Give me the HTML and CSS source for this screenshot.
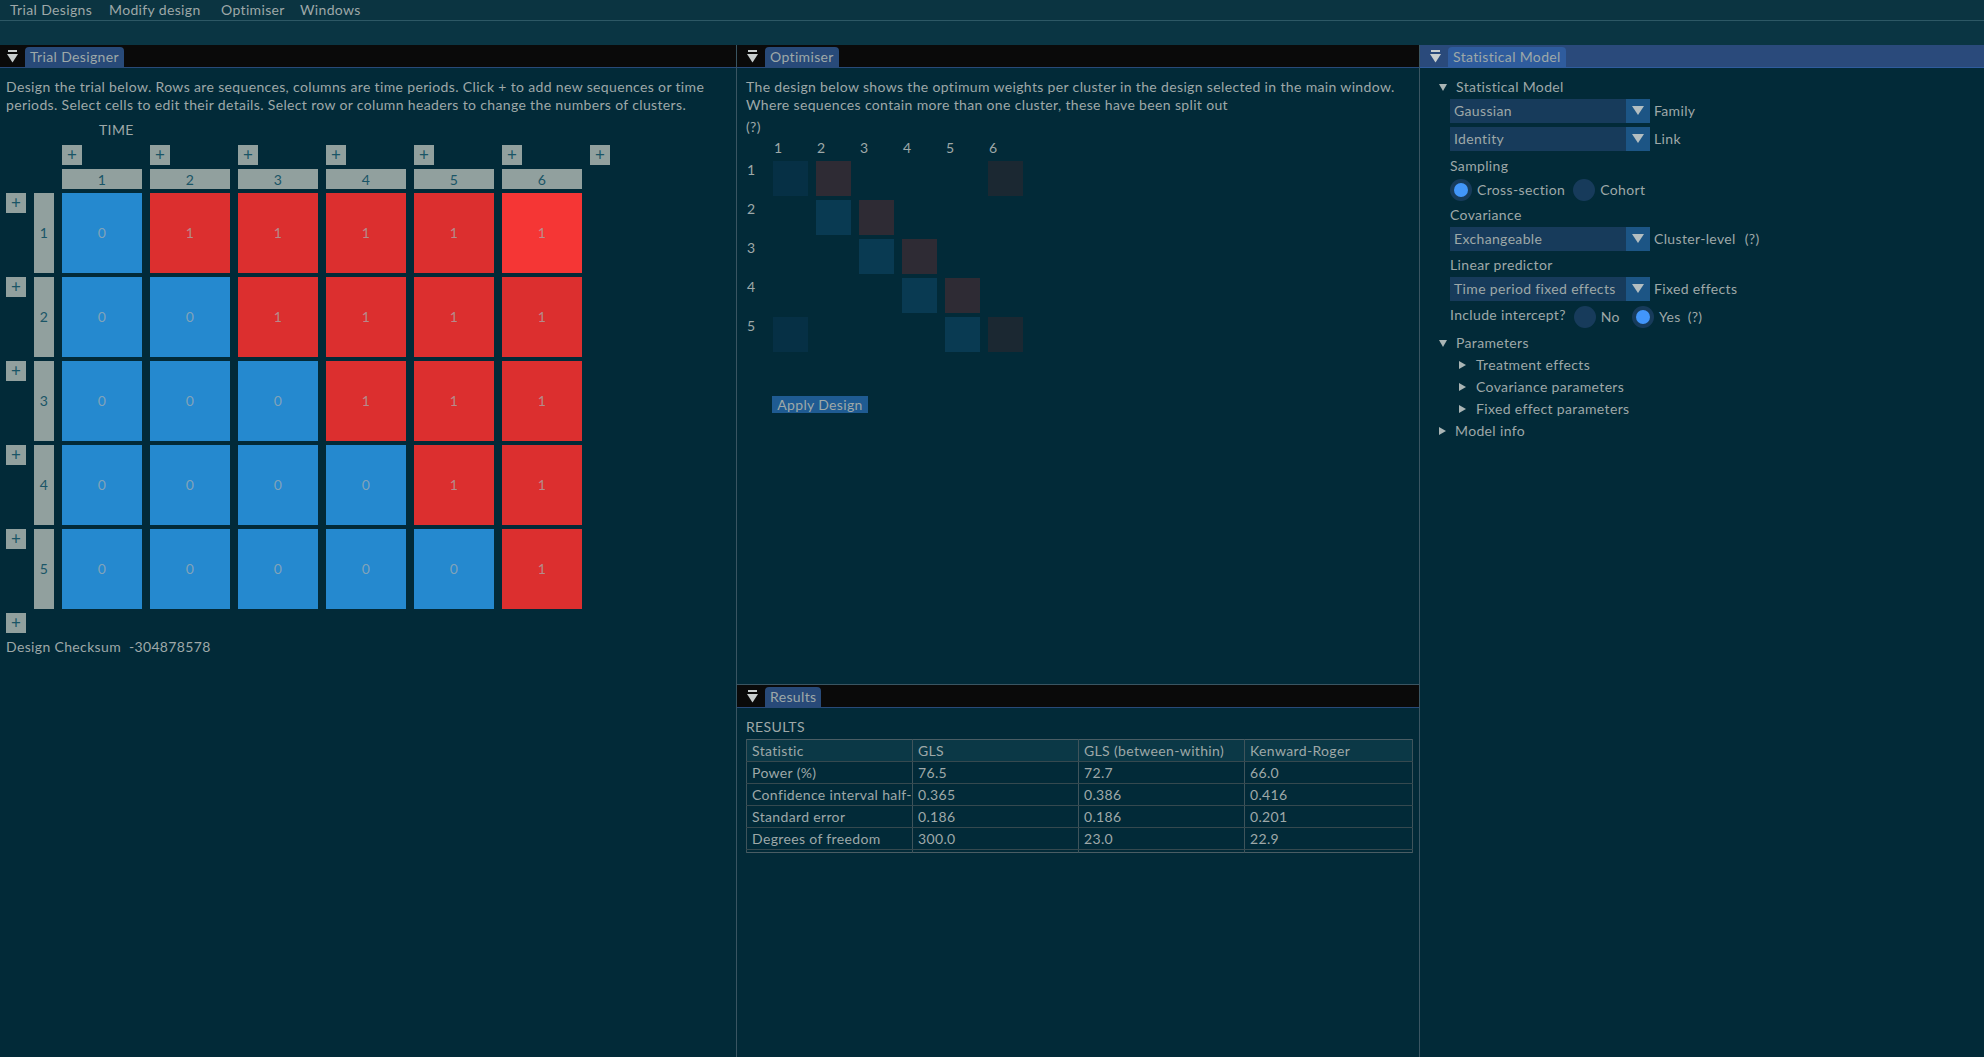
FILE: index.html
```html
<!DOCTYPE html>
<html lang="en">
<head>
<meta charset="utf-8">
<title>Trial Designer</title>
<link rel="stylesheet" href="styles.css">
</head>
<body>
<div class="app">
  <nav class="menubar">
    <span class="menu-item m1">Trial Designs</span>
    <span class="menu-item m2">Modify design</span>
    <span class="menu-item m3">Optimiser</span>
    <span class="menu-item">Windows</span>
  </nav>
  <div class="dock-gap"></div>
  <div class="workspace">
    <!-- Trial Designer -->
    <section class="panel panel-designer">
      <header class="titlebar tb-left">
        <svg class="collapse" width="11" height="13" viewBox="0 0 11 13"><rect x="1" y="0" width="9" height="2" fill="#c9cfcf"/><polygon points="0,4 11,4 5.5,12.5" fill="#c9cfcf"/></svg>
        <span class="tab">Trial Designer</span>
      </header>
      <div class="panel-body designer-body">
        <p class="para">Design the trial below. Rows are sequences, columns are time periods. Click + to add new sequences or time<br>periods. Select cells to edit their details. Select row or column headers to change the numbers of clusters.</p>
        <div class="time-label">TIME</div>
        <div class="design-grid">
          <span></span><span></span>
          <span class="plus top">+</span><span class="plus top">+</span><span class="plus top">+</span><span class="plus top">+</span><span class="plus top">+</span><span class="plus top">+</span><span class="plus top">+</span>

          <span></span><span></span>
          <span class="col-head">1</span><span class="col-head">2</span><span class="col-head">3</span><span class="col-head">4</span><span class="col-head">5</span><span class="col-head">6</span><span></span>

          <span class="plus side">+</span><span class="row-head">1</span>
          <span class="cell ctl">0</span><span class="cell trt">1</span><span class="cell trt">1</span><span class="cell trt">1</span><span class="cell trt">1</span><span class="cell trt hot">1</span><span></span>

          <span class="plus side">+</span><span class="row-head">2</span>
          <span class="cell ctl">0</span><span class="cell ctl">0</span><span class="cell trt">1</span><span class="cell trt">1</span><span class="cell trt">1</span><span class="cell trt">1</span><span></span>

          <span class="plus side">+</span><span class="row-head">3</span>
          <span class="cell ctl">0</span><span class="cell ctl">0</span><span class="cell ctl">0</span><span class="cell trt">1</span><span class="cell trt">1</span><span class="cell trt">1</span><span></span>

          <span class="plus side">+</span><span class="row-head">4</span>
          <span class="cell ctl">0</span><span class="cell ctl">0</span><span class="cell ctl">0</span><span class="cell ctl">0</span><span class="cell trt">1</span><span class="cell trt">1</span><span></span>

          <span class="plus side">+</span><span class="row-head">5</span>
          <span class="cell ctl">0</span><span class="cell ctl">0</span><span class="cell ctl">0</span><span class="cell ctl">0</span><span class="cell ctl">0</span><span class="cell trt">1</span><span></span>

          <span class="plus side">+</span>
        </div>
        <div class="checksum">Design Checksum&nbsp;&nbsp;-304878578</div>
      </div>
    </section>

    <!-- Middle column -->
    <div class="middle">
      <section class="panel panel-optimiser">
        <header class="titlebar">
          <svg class="collapse" width="11" height="13" viewBox="0 0 11 13"><rect x="1" y="0" width="9" height="2" fill="#c9cfcf"/><polygon points="0,4 11,4 5.5,12.5" fill="#c9cfcf"/></svg>
          <span class="tab">Optimiser</span>
        </header>
        <div class="panel-body mid-body">
          <p class="para">The design below shows the optimum weights per cluster in the design selected in the main window.<br>Where sequences contain more than one cluster, these have been split out</p>
          <div class="help">(?)</div>
          <div class="opt-grid">
            <span></span><span class="oc-num">1</span><span class="oc-num">2</span><span class="oc-num">3</span><span class="oc-num">4</span><span class="oc-num">5</span><span class="oc-num">6</span>
            <span class="or-num">1</span><span class="w w-dim"></span><span class="w w-red"></span><span></span><span></span><span></span><span class="w w-grey"></span>
            <span class="or-num">2</span><span></span><span class="w w-blue"></span><span class="w w-red"></span><span></span><span></span><span></span>
            <span class="or-num">3</span><span></span><span></span><span class="w w-blue"></span><span class="w w-red"></span><span></span><span></span>
            <span class="or-num">4</span><span></span><span></span><span></span><span class="w w-blue"></span><span class="w w-red"></span><span></span>
            <span class="or-num">5</span><span class="w w-dim"></span><span></span><span></span><span></span><span class="w w-blue"></span><span class="w w-grey"></span>
          </div>
          <button class="apply-btn" type="button">Apply Design</button>
        </div>
      </section>

      <section class="panel panel-results">
        <header class="titlebar">
          <svg class="collapse" width="11" height="13" viewBox="0 0 11 13"><rect x="1" y="0" width="9" height="2" fill="#c9cfcf"/><polygon points="0,4 11,4 5.5,12.5" fill="#c9cfcf"/></svg>
          <span class="tab">Results</span>
        </header>
        <div class="panel-body mid-body">
          <div class="results-title">RESULTS</div>
          <table class="results-table">
            <colgroup><col class="col-a"><col class="col-a"><col class="col-a"><col class="col-b"></colgroup>
            <thead>
              <tr><th>Statistic</th><th>GLS</th><th>GLS (between-within)</th><th>Kenward-Roger</th></tr>
            </thead>
            <tbody>
              <tr><td>Power (%)</td><td>76.5</td><td>72.7</td><td>66.0</td></tr>
              <tr><td><span class="clip">Confidence interval half-width</span></td><td>0.365</td><td>0.386</td><td>0.416</td></tr>
              <tr><td>Standard error</td><td>0.186</td><td>0.186</td><td>0.201</td></tr>
              <tr><td>Degrees of freedom</td><td>300.0</td><td>23.0</td><td>22.9</td></tr>
              <tr class="filler"><td></td><td></td><td></td><td></td></tr>
            </tbody>
          </table>
        </div>
      </section>
    </div>

    <!-- Statistical Model -->
    <section class="panel panel-model">
      <header class="titlebar focused">
        <svg class="collapse" width="11" height="13" viewBox="0 0 11 13"><rect x="1" y="0" width="9" height="2" fill="#c9cfcf"/><polygon points="0,4 11,4 5.5,12.5" fill="#c9cfcf"/></svg>
        <span class="tab">Statistical Model</span>
      </header>
      <div class="panel-body model-body">
        <div class="node lvl0">
          <svg class="arrow-open" width="8" height="7" viewBox="0 0 8 7"><polygon points="0,0 8,0 4,7" fill="#aab5b5"/></svg>
          <span>Statistical Model</span>
        </div>

        <div class="field mt3">
          <div class="combo"><span class="combo-value">Gaussian</span><span class="combo-btn"><svg width="12" height="9" viewBox="0 0 12 9"><polygon points="0,0 12,0 6,9" fill="#b3bec1"/></svg></span></div>
          <span class="field-label">Family</span>
        </div>
        <div class="field mt4">
          <div class="combo"><span class="combo-value">Identity</span><span class="combo-btn"><svg width="12" height="9" viewBox="0 0 12 9"><polygon points="0,0 12,0 6,9" fill="#b3bec1"/></svg></span></div>
          <span class="field-label">Link</span>
        </div>

        <div class="label-line mt6">Sampling</div>
        <div class="radio-row mt4">
          <span class="radio on"></span><span class="radio-label">Cross-section</span>
          <span class="radio gap8"></span><span class="radio-label">Cohort</span>
        </div>

        <div class="label-line mt5">Covariance</div>
        <div class="field mt3">
          <div class="combo"><span class="combo-value">Exchangeable</span><span class="combo-btn"><svg width="12" height="9" viewBox="0 0 12 9"><polygon points="0,0 12,0 6,9" fill="#b3bec1"/></svg></span></div>
          <span class="field-label">Cluster-level</span><span class="qmark">(?)</span>
        </div>

        <div class="label-line mt5">Linear predictor</div>
        <div class="field mt3">
          <div class="combo"><span class="combo-value">Time period fixed effects</span><span class="combo-btn"><svg width="12" height="9" viewBox="0 0 12 9"><polygon points="0,0 12,0 6,9" fill="#b3bec1"/></svg></span></div>
          <span class="field-label">Fixed effects</span>
        </div>

        <div class="radio-row intercept mt5">
          <span class="intercept-text">Include intercept?</span>
          <span class="radio gap8"></span><span class="radio-label">No</span>
          <span class="radio on gap12"></span><span class="radio-label">Yes</span><span class="qmark-sm">(?)</span>
        </div>

        <div class="node lvl0 mt6">
          <svg class="arrow-open" width="8" height="7" viewBox="0 0 8 7"><polygon points="0,0 8,0 4,7" fill="#aab5b5"/></svg>
          <span>Parameters</span>
        </div>
        <div class="node lvl1 mt4">
          <svg class="arrow-closed" width="7" height="8" viewBox="0 0 7 8"><polygon points="0,0 7,4 0,8" fill="#aab5b5"/></svg>
          <span>Treatment effects</span>
        </div>
        <div class="node lvl1 mt4">
          <svg class="arrow-closed" width="7" height="8" viewBox="0 0 7 8"><polygon points="0,0 7,4 0,8" fill="#aab5b5"/></svg>
          <span>Covariance parameters</span>
        </div>
        <div class="node lvl1 mt4">
          <svg class="arrow-closed" width="7" height="8" viewBox="0 0 7 8"><polygon points="0,0 7,4 0,8" fill="#aab5b5"/></svg>
          <span>Fixed effect parameters</span>
        </div>
        <div class="node lvl0 mt4">
          <svg class="arrow-closed" width="7" height="8" viewBox="0 0 7 8"><polygon points="0,0 7,4 0,8" fill="#aab5b5"/></svg>
          <span>Model info</span>
        </div>
      </div>
    </section>
  </div>
</div>
</body>
</html>
```

FILE: styles.css
```css
* {
  box-sizing: border-box;
  margin: 0;
  padding: 0;
}

html, body {
  width: 1984px;
  height: 1057px;
  overflow: hidden;
}

body {
  background: #022a38;
  color: #9ea8a8;
  font-family: "Lato", "Liberation Sans", sans-serif;
  font-size: 14px;
  letter-spacing: 0.35px;
  line-height: 18px;
}

.app {
  display: flex;
  flex-direction: column;
  height: 1057px;
}

/* ---------- menu bar ---------- */
.menubar {
  height: 21px;
  background: #0b3441;
  border-bottom: 1px solid #2d5865;
  display: flex;
  align-items: center;
  padding-left: 10px;
  white-space: nowrap;
}

.menu-item {
  line-height: 20px;
}

.m1 { width: 99px; }
.m2 { width: 112px; }
.m3 { width: 79px; }

.dock-gap {
  height: 24px;
  background: #0a3543;
}

/* ---------- workspace ---------- */
.workspace {
  flex: 1;
  display: flex;
  min-height: 0;
}

.panel {
  display: flex;
  flex-direction: column;
  background: #022a38;
  overflow: hidden;
}

.panel-designer {
  width: 737px;
  border-right: 1px solid #3a5562;
}

.middle {
  width: 683px;
  border-right: 1px solid #3a5562;
  display: flex;
  flex-direction: column;
}

.panel-optimiser {
  height: 640px;
  border-bottom: 1px solid #3a5562;
}

.panel-results {
  flex: 1;
}

.panel-model {
  flex: 1;
}

/* ---------- title bars ---------- */
.titlebar {
  height: 23px;
  flex: none;
  background: #0a0a0a;
  border-bottom: 1px solid #284a79;
  display: flex;
  align-items: flex-end;
  padding-left: 10px;
}

.tb-left {
  padding-left: 7px;
}

.titlebar.focused {
  background: #2a4a7b;
  border-bottom-color: #2f5c9d;
}

.collapse {
  display: block;
  margin-bottom: 4px;
  margin-right: 7px;
  flex: none;
}

.tab {
  height: 20px;
  line-height: 20px;
  padding: 0 5px;
  background: #284a79;
  border-radius: 4px 4px 0 0;
  white-space: nowrap;
}

.focused .tab {
  background: #2f5c9d;
}

.panel-body {
  flex: 1;
  padding-top: 10px;
  white-space: nowrap;
}

.para {
  white-space: nowrap;
}

/* ---------- trial designer ---------- */
.designer-body {
  padding-left: 6px;
}

.time-label {
  margin-top: 7px;
  margin-left: 93px;
}

.design-grid {
  margin-top: 6px;
  display: grid;
  grid-template-columns: 20px 20px repeat(6, 80px) 20px;
  grid-template-rows: 20px 20px repeat(5, 80px) 20px;
  column-gap: 8px;
  row-gap: 4px;
}

.plus {
  width: 20px;
  height: 20px;
  background: #91a09e;
  color: #1a5566;
  font-size: 17px;
  letter-spacing: 0;
  line-height: 19px;
  text-align: center;
}

.plus.side {
  align-self: start;
}

.col-head {
  background: #91a09e;
  color: #1a5566;
  text-align: center;
  line-height: 21px;
}

.row-head {
  background: #91a09e;
  color: #1a5566;
  display: flex;
  align-items: center;
  justify-content: center;
}

.cell {
  display: flex;
  align-items: center;
  justify-content: center;
  color: rgba(165, 175, 175, 0.72);
}

.cell.ctl { background: #2589cf; }
.cell.trt { background: #dc2f2f; }
.cell.trt.hot { background: #f53635; }

.checksum {
  margin-top: 5px;
}

/* ---------- optimiser ---------- */
.mid-body {
  padding-left: 9px;
}

.help {
  margin-top: 4px;
}

.opt-grid {
  margin-top: 3px;
  margin-left: 1px;
  display: grid;
  grid-template-columns: 18px repeat(6, 35px);
  grid-template-rows: 18px repeat(5, 35px);
  column-gap: 8px;
  row-gap: 4px;
}

.oc-num {
  padding-left: 1px;
}

.w-dim  { background: #063045; }
.w-blue { background: #093a52; }
.w-red  { background: #2e2b34; }
.w-grey { background: #1b2832; }

.apply-btn {
  display: block;
  margin-top: 44px;
  margin-left: 26px;
  width: 96px;
  height: 17px;
  border: none;
  background: #1f5b92;
  color: #9ea8a8;
  font-family: inherit;
  font-size: 14px;
  letter-spacing: 0.35px;
  line-height: 17px;
  text-align: center;
}

/* ---------- results ---------- */
.results-title {
  line-height: 18px;
}

.results-table {
  margin-top: 3px;
  border-collapse: collapse;
  table-layout: fixed;
  width: 666px;
  border: 1px solid #4a5d64;
}

.col-a { width: 166px; }
.col-b { width: 168px; }

.results-table th,
.results-table td {
  height: 22px;
  padding: 0 0 0 5px;
  font-weight: normal;
  text-align: left;
  white-space: nowrap;
  overflow: hidden;
  border-left: 1px solid #3f545b;
  border-right: 1px solid #3f545b;
  border-bottom: 1px solid #35494f;
  line-height: 20px;
}

.clip {
  display: block;
  width: 160px;
  overflow: hidden;
}

.results-table thead tr {
  background: #0b3846;
}

.results-table tr.filler td {
  height: 3px;
  line-height: 0;
  font-size: 0;
  border-bottom: none;
}

/* ---------- statistical model ---------- */
.model-body {
  padding-left: 0;
}

.node {
  display: flex;
  align-items: center;
  height: 18px;
}

.node.lvl0 {
  padding-left: 19px;
}

.node.lvl0 svg {
  margin-right: 9px;
}

.node.lvl1 {
  padding-left: 39px;
}

.node.lvl1 svg {
  margin-right: 10px;
}

.field {
  display: flex;
  align-items: center;
  height: 24px;
  padding-left: 30px;
}

.combo {
  width: 200px;
  height: 24px;
  display: flex;
  background: #173b5b;
}

.combo-value {
  flex: 1;
  padding-left: 4px;
  line-height: 24px;
  overflow: hidden;
}

.combo-btn {
  width: 24px;
  height: 24px;
  background: #1c5585;
  display: flex;
  justify-content: center;
  padding-top: 7px;
}

.combo-btn svg {
  display: block;
}

.field-label {
  margin-left: 4px;
}

.qmark {
  margin-left: 9px;
}

.label-line {
  height: 18px;
  padding-left: 30px;
}

.radio-row {
  display: flex;
  align-items: center;
  height: 22px;
  padding-left: 30px;
}

.radio {
  width: 22px;
  height: 22px;
  border-radius: 50%;
  background: #173b5b;
  display: flex;
  align-items: center;
  justify-content: center;
  flex: none;
}

.radio.on::after {
  content: "";
  width: 14px;
  height: 14px;
  border-radius: 50%;
  background: #4296fa;
}

.radio-label {
  margin-left: 5px;
}

.gap8 { margin-left: 8px; }
.gap12 { margin-left: 12px; }

.intercept-text {
  align-self: flex-start;
}

.qmark-sm {
  margin-left: 7px;
}

.mt3 { margin-top: 3px; }
.mt4 { margin-top: 4px; }
.mt5 { margin-top: 5px; }
.mt6 { margin-top: 6px; }
```
